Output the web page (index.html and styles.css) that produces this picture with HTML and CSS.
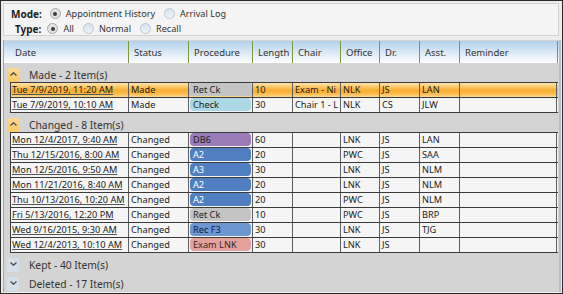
FILE: index.html
```html
<!DOCTYPE html>
<html lang="en">
<head>
  <meta charset="UTF-8" />
  <title>Appointment History</title>
  <link rel="stylesheet" href="styles.css">
</head>
<body>

<div class="window">
  <div class="filters">
    <div class="filter-row">
      <span class="filter-label">Mode:</span>
      <label class="radio"><span class="dot checked"></span>Appointment History</label>
      <label class="radio"><span class="dot"></span>Arrival Log</label>
    </div>
    <div class="filter-row type">
      <span class="filter-label">Type:</span>
      <label class="radio"><span class="dot checked"></span>All</label>
      <label class="radio"><span class="dot"></span>Normal</label>
      <label class="radio"><span class="dot"></span>Recall</label>
    </div>
  </div>

  <div class="list">
    <div class="grid-head">
      <span class="indent"></span>
      <span>Date</span>
      <span>Status</span>
      <span>Procedure</span>
      <span>Length</span>
      <span>Chair</span>
      <span>Office</span>
      <span>Dr.</span>
      <span>Asst.</span>
      <span>Reminder</span>
    </div>

    <div class="group">
      <span class="toggle open"><svg width="7" height="4" viewBox="0 0 7 4"><polyline points="0.5,3.5 3.5,0.8 6.5,3.5" /></svg></span>
      Made - 2 Item(s)
    </div>
    <div class="rows">
      <div class="row selected">
        <span><a href="#">Tue 7/9/2019, 11:20 AM</a></span>
        <span>Made</span>
        <span><b class="badge gray square">Ret Ck</b></span>
        <span>10</span>
        <span>Exam - Ni</span>
        <span>NLK</span>
        <span>JS</span>
        <span>LAN</span>
        <span></span>
      </div>
      <div class="row">
        <span><a href="#">Tue 7/9/2019, 10:10 AM</a></span>
        <span>Made</span>
        <span><b class="badge light">Check</b></span>
        <span>30</span>
        <span>Chair 1 - L</span>
        <span>NLK</span>
        <span>CS</span>
        <span>JLW</span>
        <span></span>
      </div>
    </div>

    <div class="group">
      <span class="toggle open"><svg width="7" height="4" viewBox="0 0 7 4"><polyline points="0.5,3.5 3.5,0.8 6.5,3.5" /></svg></span>
      Changed - 8 Item(s)
    </div>
    <div class="rows">
      <div class="row">
        <span><a href="#">Mon 12/4/2017, 9:40 AM</a></span>
        <span>Changed</span>
        <span><b class="badge purple">DB6</b></span>
        <span>60</span>
        <span></span>
        <span>LNK</span>
        <span>JS</span>
        <span>LAN</span>
        <span></span>
      </div>
      <div class="row">
        <span><a href="#">Thu 12/15/2016, 8:00 AM</a></span>
        <span>Changed</span>
        <span><b class="badge blue">A2</b></span>
        <span>20</span>
        <span></span>
        <span>PWC</span>
        <span>JS</span>
        <span>SAA</span>
        <span></span>
      </div>
      <div class="row">
        <span><a href="#">Mon 12/5/2016, 9:50 AM</a></span>
        <span>Changed</span>
        <span><b class="badge blue">A3</b></span>
        <span>30</span>
        <span></span>
        <span>LNK</span>
        <span>JS</span>
        <span>NLM</span>
        <span></span>
      </div>
      <div class="row">
        <span><a href="#">Mon 11/21/2016, 8:40 AM</a></span>
        <span>Changed</span>
        <span><b class="badge blue">A2</b></span>
        <span>20</span>
        <span></span>
        <span>LNK</span>
        <span>JS</span>
        <span>NLM</span>
        <span></span>
      </div>
      <div class="row">
        <span><a href="#">Thu 10/13/2016, 10:20 AM</a></span>
        <span>Changed</span>
        <span><b class="badge blue">A2</b></span>
        <span>20</span>
        <span></span>
        <span>PWC</span>
        <span>JS</span>
        <span>NLM</span>
        <span></span>
      </div>
      <div class="row">
        <span><a href="#">Fri 5/13/2016, 12:20 PM</a></span>
        <span>Changed</span>
        <span><b class="badge gray">Ret Ck</b></span>
        <span>10</span>
        <span></span>
        <span>PWC</span>
        <span>JS</span>
        <span>BRP</span>
        <span></span>
      </div>
      <div class="row">
        <span><a href="#">Wed 9/16/2015, 9:30 AM</a></span>
        <span>Changed</span>
        <span><b class="badge rec">Rec F3</b></span>
        <span>30</span>
        <span></span>
        <span>LNK</span>
        <span>JS</span>
        <span>TJG</span>
        <span></span>
      </div>
      <div class="row">
        <span><a href="#">Wed 12/4/2013, 10:10 AM</a></span>
        <span>Changed</span>
        <span><b class="badge salmon">Exam LNK</b></span>
        <span>30</span>
        <span></span>
        <span>LNK</span>
        <span>JS</span>
        <span></span>
        <span></span>
      </div>
    </div>

    <div class="group">
      <span class="toggle"><svg width="7" height="4" viewBox="0 0 7 4"><polyline points="0.5,0.5 3.5,3.2 6.5,0.5" /></svg></span>
      Kept - 40 Item(s)
    </div>
    <div class="group">
      <span class="toggle"><svg width="7" height="4" viewBox="0 0 7 4"><polyline points="0.5,0.5 3.5,3.2 6.5,0.5" /></svg></span>
      Deleted - 17 Item(s)
    </div>
  </div>
</div>

</body>
</html>
```

FILE: styles.css
```css
body {
  margin: 0;
  font-family: "Noto Sans", sans-serif;
  font-size: 9.5px;
  color: #222;
}

.window {
  width: 563px;
  height: 294px;
  box-sizing: border-box;
  border: 1px solid #2b2b2b;
  background: #ececec;
  overflow: hidden;
}

/* filter panel */
.filters {
  margin: 2px 3px 0 2px;
  height: 33px;
  box-sizing: border-box;
  border: 1px solid #d2d2d2;
  background: #f4f4f4;
  padding-top: 2px;
  font-size: 9.1px;
}
.filter-row {
  display: flex;
  align-items: center;
  height: 15px;
  padding-left: 7px;
}
.filter-row.type {
  padding-left: 11px;
}
.filter-label {
  font-weight: bold;
  font-size: 10px;
  margin-right: 8px;
}
.filter-row.type .filter-label {
  margin-right: 6px;
}
.radio {
  display: flex;
  align-items: center;
  margin-right: 9px;
  color: #333;
}
.dot {
  width: 11px;
  height: 11px;
  box-sizing: border-box;
  border-radius: 50%;
  border: 1px solid #b9c7d5;
  background: linear-gradient(#d7e3ee, #eef3f8);
  margin-right: 5px;
  position: relative;
}
.dot.checked {
  border-color: #a9a9a9;
  background: #e2e2e2;
}
.dot.checked::after {
  content: "";
  position: absolute;
  left: 2.5px;
  top: 2.5px;
  width: 4px;
  height: 4px;
  border-radius: 50%;
  background: #3c3c3c;
}

/* grouped list */
.list {
  margin: 4px 1px 0 2px;
  padding-top: 1px;
  height: 252px;
  box-sizing: border-box;
  border-left: 1px solid #a6a6a6;
  border-right: 2px solid #aebfd1;
  background: #d4d4d4;
}
.grid-head {
  display: grid;
  grid-template-columns: 6px 119px 60px 64px 40px 48px 39px 40px 40px 98px;
  height: 22px;
  background: linear-gradient(#b2d0eb, #ffffff);
  color: #333;
}
.grid-head span {
  display: flex;
  align-items: center;
  padding-left: 5px;
  border-right: 1px solid #7b9a3c;
}
.grid-head span.indent {
  padding: 0;
  border: none;
}

.group {
  display: flex;
  align-items: flex-end;
  height: 19px;
  line-height: 14px;
  font-size: 10.3px;
  color: #333;
}
.toggle {
  width: 12px;
  height: 14px;
  margin: 0 10px 0 3px;
  display: flex;
  justify-content: center;
  padding-top: 4px;
  box-sizing: border-box;
  background: #d5dfe9;
}
.toggle.open {
  background: linear-gradient(#fdd894, #fbc865);
}
.toggle svg polyline {
  fill: none;
  stroke: #4a4a4a;
  stroke-width: 1.3;
}

.rows {
  margin-left: 6px;
  width: 548px;
  border-left: 1px solid #3a3a3a;
  border-bottom: 1px solid #3a3a3a;
  box-sizing: border-box;
}
.row {
  display: grid;
  grid-template-columns: 118px 60px 64px 40px 48px 39px 40px 40px 97px;
  height: 15px;
  border-top: 1px solid #3a3a3a;
  box-sizing: border-box;
  background: #f5f5f5;
  line-height: 14px;
  font-size: 9.2px;
  color: #1c1c1c;
}
.row > span {
  border-right: 1px solid #5f5f5f;
  padding-left: 2px;
  white-space: nowrap;
  overflow: hidden;
}
.row > span:first-child {
  padding-left: 1px;
}
.row > span:nth-child(3) {
  padding-left: 1px;
}
.row a {
  color: #1c1c1c;
  text-decoration: underline;
  text-decoration-color: #555;
}
.row.selected {
  background: linear-gradient(#fee4ae 0%, #fbc462 30%, #f9ad2e 55%, #fbbd50 80%, #fddc98 100%);
}

.badge {
  display: block;
  font-weight: normal;
  height: 13px;
  line-height: 13px;
  margin-right: 1px;
  padding-left: 3px;
  border-radius: 4px;
  color: #222;
}
.badge.gray { background: #c4c4c4; }
.badge.square { border-radius: 1px; }
.badge.light { background: #acd7e5; }
.badge.purple { background: #9a7cb9; }
.badge.blue { background: #4f7fc1; color: #fff; }
.badge.rec { background: #6b96d0; color: #10203f; }
.badge.salmon { background: #e5a29d; color: #3a2222; }
```
